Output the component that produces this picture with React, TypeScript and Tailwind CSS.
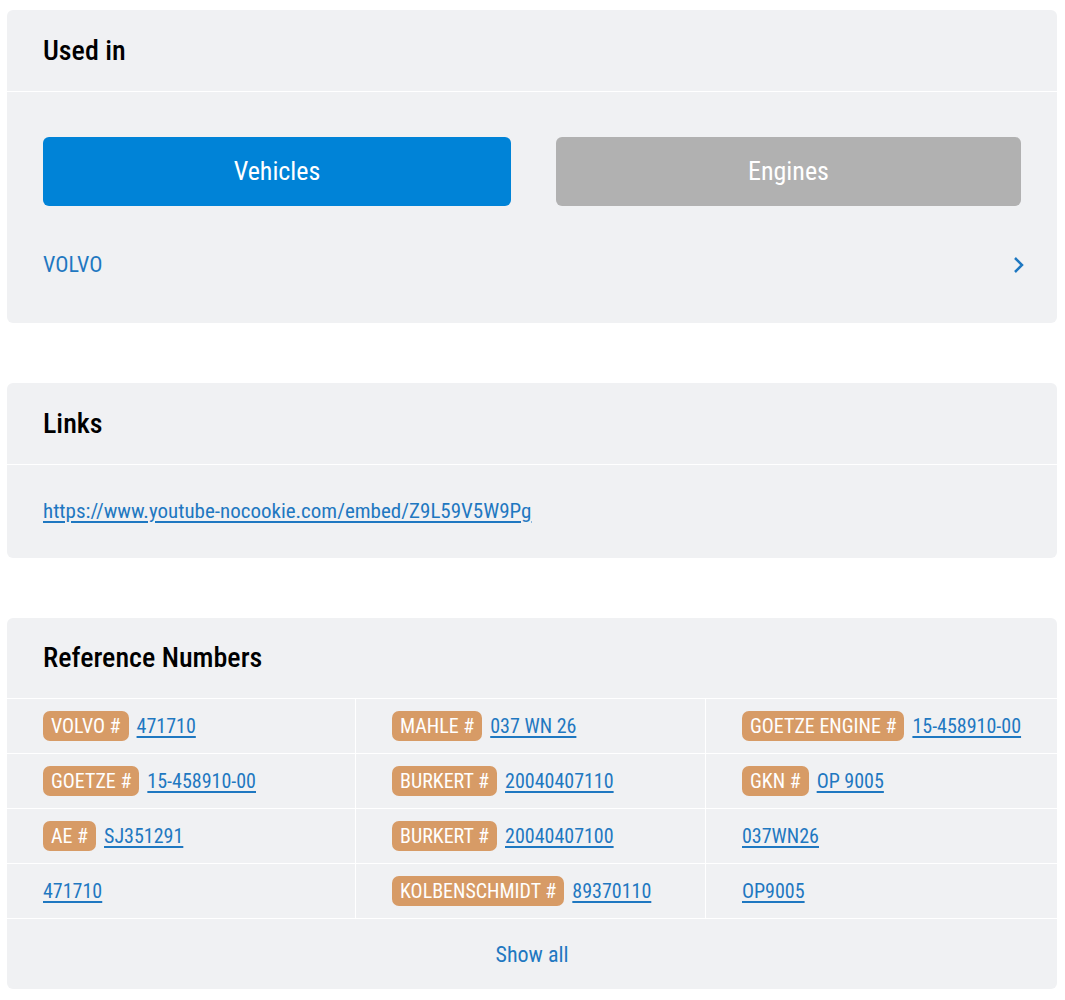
import React from "react";

const font = { fontFamily: '"Roboto Condensed", "Liberation Sans Narrow", "DejaVu Sans Condensed", "Arial Narrow", sans-serif' };

function Badge({ children }: { children: React.ReactNode }) {
  return (
    <span className="inline-flex h-[30px] items-center rounded-[7px] bg-[#d79b66] px-[8px] text-[20px] leading-none text-white">
      {children}
    </span>
  );
}

function Ref({ label, num }: { label?: string; num: string }) {
  return (
    <div className="flex h-[54px] items-center gap-[8px] pl-[36px]">
      {label && <Badge>{label} #</Badge>}
      <a href="#" className="text-[20px] leading-none text-[#1f78c1] underline underline-offset-[3px]">{num}</a>
    </div>
  );
}

export default function App() {
  const rows: [string | undefined, string][][] = [
    [["VOLVO", "471710"], ["MAHLE", "037 WN 26"], ["GOETZE ENGINE", "15-458910-00"]],
    [["GOETZE", "15-458910-00"], ["BURKERT", "20040407110"], ["GKN", "OP 9005"]],
    [["AE", "SJ351291"], ["BURKERT", "20040407100"], [undefined, "037WN26"]],
    [[undefined, "471710"], ["KOLBENSCHMIDT", "89370110"], [undefined, "OP9005"]],
  ];
  return (
    <div className="bg-white pt-[10px] pb-[12px]" style={font}>
      <div className="ml-[7px] flex w-[1050px] flex-col gap-[60px]">
        <section className="rounded-[6px] bg-[#f0f1f3]">
          <div className="flex h-[82px] items-center border-b border-white px-[36px]">
            <h2 className="text-[28px] font-medium text-black">Used in</h2>
          </div>
          <div className="px-[36px] pt-[45px]">
            <div className="flex gap-[45px]">
              <button className="h-[69px] w-[468px] rounded-[6px] bg-[#0083d7] text-[26px] text-white">Vehicles</button>
              <button className="h-[69px] w-[465px] rounded-[6px] bg-[#b1b1b1] text-[26px] text-white">Engines</button>
            </div>
            <div className="flex h-[117px] items-center justify-between">
              <span className="text-[22px] text-[#1f78c1]">VOLVO</span>
              <svg width="12" height="20" viewBox="0 0 12 20" className="-mr-[4px]">
                <path d="M2 3l7 7-7 7" fill="none" stroke="#1f78c1" strokeWidth="2.5" />
              </svg>
            </div>
          </div>
        </section>

        <section className="rounded-[6px] bg-[#f0f1f3]">
          <div className="flex h-[82px] items-center border-b border-white px-[36px]">
            <h2 className="text-[28px] font-medium text-black">Links</h2>
          </div>
          <div className="flex h-[93px] items-center px-[36px]">
            <a href="#" className="text-[21px] text-[#1f78c1] underline underline-offset-[3px]">
              https://www.youtube-nocookie.com/embed/Z9L59V5W9Pg
            </a>
          </div>
        </section>

        <section className="rounded-[6px] bg-[#f0f1f3]">
          <div className="flex h-[81px] items-center border-b border-white px-[36px]">
            <h2 className="text-[28px] font-medium text-black">Reference Numbers</h2>
          </div>
          {rows.map((row, i) => (
            <div key={i} className="grid grid-cols-[349px_350px_351px] border-b border-white">
              {row.map(([l, n], j) => (
                <div key={j} className={j < 2 ? "border-r border-white" : ""}>
                  <Ref label={l} num={n} />
                </div>
              ))}
            </div>
          ))}
          <div className="flex h-[70px] items-center justify-center">
            <a href="#" className="text-[22px] text-[#1f78c1]">Show all</a>
          </div>
        </section>
      </div>
    </div>
  );
}
